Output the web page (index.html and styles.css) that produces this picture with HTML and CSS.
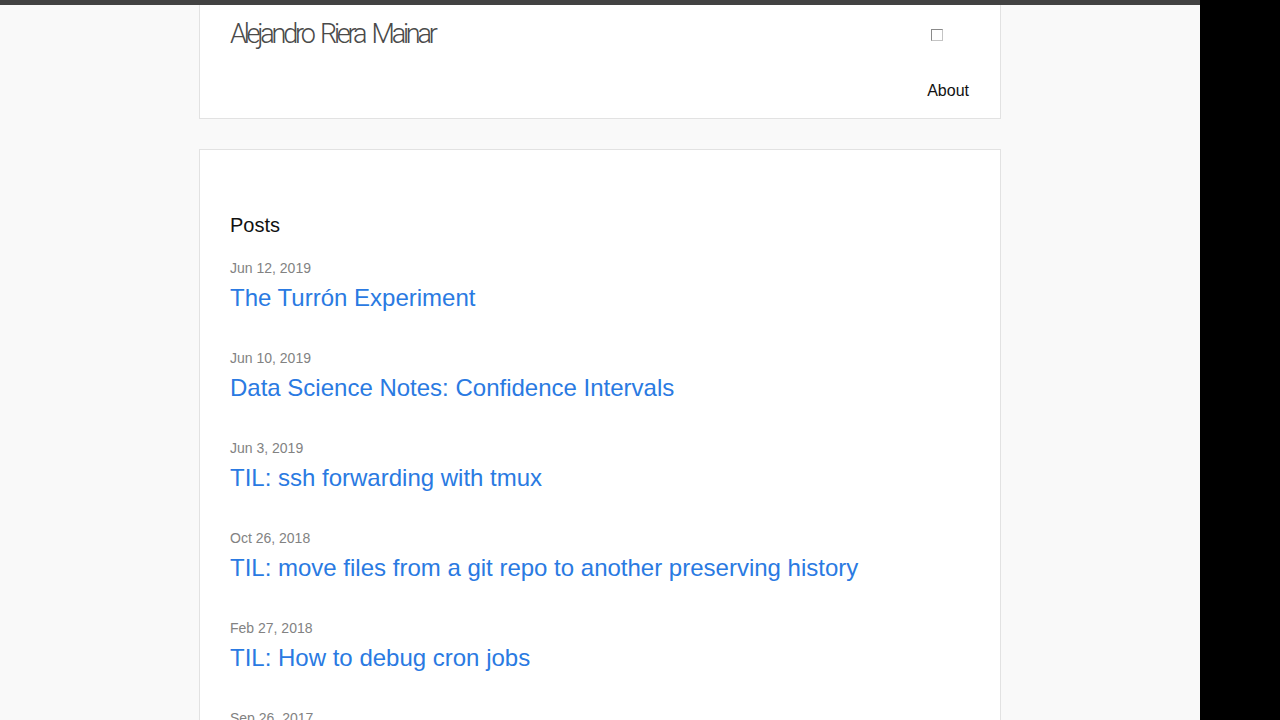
FILE: index.html
```html
<!DOCTYPE html>
<html lang="en">
<head>
    <meta charset="UTF-8">
    <meta name="viewport" content="width=device-width, initial-scale=1.0">
    <title>Alejandro Riera Mainar</title>
    <link rel="stylesheet" href="styles.css">
</head>
<body>
    <div class="page">
        <header class="site-header">
            <div class="header-top">
                <a class="site-title" href="#">Alejandro Riera Mainar</a>
                <input type="checkbox" class="nav-trigger" id="navTrigger">
            </div>
            <nav class="site-nav">
                <a class="page-link" href="#">About</a>
            </nav>
        </header>

        <main class="page-content">
            <h2 class="post-list-heading">Posts</h2>
            <ul class="post-list">
                <li>
                    <span class="post-meta">Jun 12, 2019</span>
                    <h3><a class="post-link" href="#">The Turrón Experiment</a></h3>
                </li>
                <li>
                    <span class="post-meta">Jun 10, 2019</span>
                    <h3><a class="post-link" href="#">Data Science Notes: Confidence Intervals</a></h3>
                </li>
                <li>
                    <span class="post-meta">Jun 3, 2019</span>
                    <h3><a class="post-link" href="#">TIL: ssh forwarding with tmux</a></h3>
                </li>
                <li>
                    <span class="post-meta">Oct 26, 2018</span>
                    <h3><a class="post-link" href="#">TIL: move files from a git repo to another preserving history</a></h3>
                </li>
                <li>
                    <span class="post-meta">Feb 27, 2018</span>
                    <h3><a class="post-link" href="#">TIL: How to debug cron jobs</a></h3>
                </li>
                <li>
                    <span class="post-meta">Sep 26, 2017</span>
                    <h3><a class="post-link" href="#">TIL: Python virtualenvs</a></h3>
                </li>
            </ul>
        </main>
    </div>
</body>
</html>
```

FILE: styles.css
```css
html {
    background: #000;
}
body {
    margin: 0;
    font-family: "Liberation Sans", Arial, sans-serif;
    color: #111;
}
a {
    text-decoration: none;
}
.page {
    width: 1200px;
    min-height: 100vh;
    background: #f9f9f9;
    border-top: 5px solid #424242;
    box-sizing: border-box;
}
.site-header {
    width: 802px;
    margin: 0 auto;
    background: #fff;
    border: 1px solid #e2e2e2;
    border-top: none;
    padding: 0 30px;
    box-sizing: border-box;
}
.header-top {
    height: 58px;
    display: flex;
    align-items: center;
    justify-content: space-between;
}
.site-title {
    font-family: Roboto, "Liberation Sans", sans-serif;
    font-weight: 300;
    font-size: 27px;
    letter-spacing: -3.2px;
    word-spacing: 4px;
    color: #4a4a4a;
    margin-top: -1px;
}
.nav-trigger {
    appearance: none;
    -webkit-appearance: none;
    width: 12px;
    height: 12px;
    margin: 2px 27px 0 0;
    border: 1px solid #c4c4c4;
    border-top-color: #8a8a8a;
    border-left-color: #8a8a8a;
    background: #fff;
    box-sizing: border-box;
}
.site-nav {
    height: 55px;
    display: flex;
    align-items: center;
    justify-content: flex-end;
}
.page-link {
    font-size: 16px;
    color: #111;
    margin-right: 1px;
}
.page-content {
    width: 802px;
    margin: 30px auto 0;
    background: #fff;
    border: 1px solid #e2e2e2;
    box-sizing: border-box;
    padding: 63px 30px 30px;
}
.post-list-heading {
    margin: 0 0 20px;
    font-size: 20px;
    line-height: 24px;
    font-weight: normal;
    color: #111;
}
.post-list {
    list-style: none;
    margin: 0;
    padding: 0;
}
.post-list li {
    margin-bottom: 30px;
}
.post-meta {
    display: block;
    font-size: 14px;
    line-height: 22px;
    color: #828282;
}
.post-list h3 {
    margin: 0;
    font-size: 24px;
    line-height: 38px;
    font-weight: normal;
}
.post-link {
    color: #2a7ae2;
}
```
